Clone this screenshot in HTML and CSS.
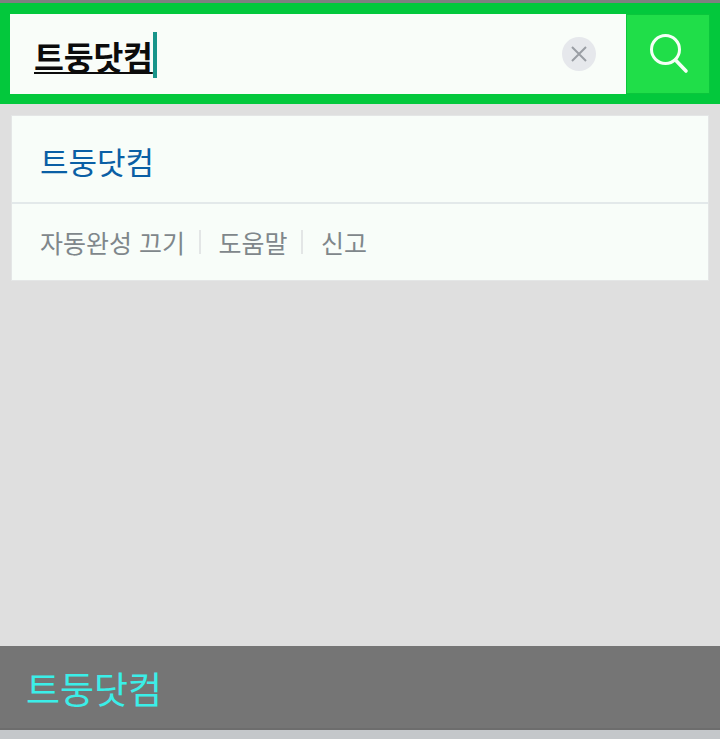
FILE: index.html
```html
<!DOCTYPE html>
<html lang="ko">
<head>
<meta charset="UTF-8" />
<meta name="viewport" content="width=device-width, initial-scale=1" />
<title>트둥닷컴</title>
<link rel="stylesheet" href="styles.css">
</head>
<body>
  <div class="status-line"></div>
  <header class="search-bar">
    <div class="search-input">
      <div class="query"><span class="query-text">트둥닷컴</span><span class="caret"></span></div>
      <button class="clear" aria-label="지우기">
        <svg width="18" height="18" viewBox="0 0 18 18"><path d="M2 2 L16 16 M16 2 L2 16" stroke="#9a9ea4" stroke-width="2" fill="none"/></svg>
      </button>
    </div>
    <button class="search-btn" aria-label="검색">
      <svg width="44" height="44" viewBox="0 0 44 44"><circle cx="19.5" cy="17.5" r="14" stroke="#f4fff6" stroke-width="3" fill="none"/><path d="M29.5 28 L40 39" stroke="#f4fff6" stroke-width="3.6" stroke-linecap="round" fill="none"/></svg>
    </button>
  </header>

  <main class="content">
    <section class="suggest-card">
      <a class="suggest-item">트둥닷컴</a>
      <div class="suggest-foot">
        <a>자동완성 끄기</a>
        <span class="sep"></span>
        <a>도움말</a>
        <span class="sep"></span>
        <a>신고</a>
      </div>
    </section>
  </main>

  <div class="toast">트둥닷컴</div>
  <div class="bottom-line"></div>
</body>
</html>
```

FILE: styles.css
```css
* {
  box-sizing: border-box;
}
html, body {
  height: 100%;
}
body {
  margin: 0;
  background: #dfdfdf;
  font-family: "Noto Sans CJK KR", "Liberation Sans", sans-serif;
  display: flex;
  flex-direction: column;
  height: 739px;
  overflow: hidden;
}
.status-line {
  height: 3px;
  background: #808080;
}
.search-bar {
  height: 101px;
  background: #03c83c;
  padding: 11px 10px 10px;
  display: flex;
}
.search-input {
  width: 616px;
  height: 80px;
  background: #f9fdf9;
  display: flex;
  align-items: center;
  justify-content: space-between;
  padding-left: 24px;
  padding-right: 30px;
}
.query {
  display: flex;
  align-items: center;
  padding-top: 4px;
}
.query-text {
  font-size: 32.5px;
  line-height: 40px;
  font-weight: 700;
  letter-spacing: -0.2px;
  color: #0c0c0c;
  text-decoration: underline;
  text-decoration-thickness: 2px;
  text-underline-offset: 2px;
}
.caret {
  width: 4px;
  height: 46px;
  background: #18958a;
  margin-top: -2px;
}
.clear {
  width: 34px;
  height: 34px;
  border: none;
  border-radius: 50%;
  background: #e6e8ec;
  padding: 0;
  display: flex;
  align-items: center;
  justify-content: center;
}
.search-btn {
  width: 84px;
  height: 80px;
  border: 1px solid #0bc63c;
  background: #20de49;
  padding: 0;
  display: flex;
  align-items: center;
  justify-content: center;
}
.content {
  flex: 1;
  padding: 12px 12px 0;
}
.suggest-card {
  height: 164px;
  background: #f8fdf9;
  box-shadow: 0 0 0 1px #e4e6e6;
}
.suggest-item {
  display: block;
  height: 88px;
  padding-left: 28px;
  font-size: 31px;
  line-height: 90px;
  color: #0a5fa5;
  border-bottom: 2px solid #e3e9ea;
}
.suggest-foot {
  display: flex;
  align-items: center;
  height: 76px;
  padding-left: 28px;
  font-size: 25px;
  color: #7f878b;
}
.sep {
  width: 2px;
  height: 24px;
  background: #e3e6e6;
  margin: 0 18px 0 13.5px;
}
.toast {
  height: 84px;
  background: #757575;
  border-bottom: 2px solid #6d6d6d;
  color: #3beee8;
  font-size: 37px;
  line-height: 84px;
  padding-left: 26px;
}
.bottom-line {
  height: 9px;
  background: #c4c7ca;
}
```
